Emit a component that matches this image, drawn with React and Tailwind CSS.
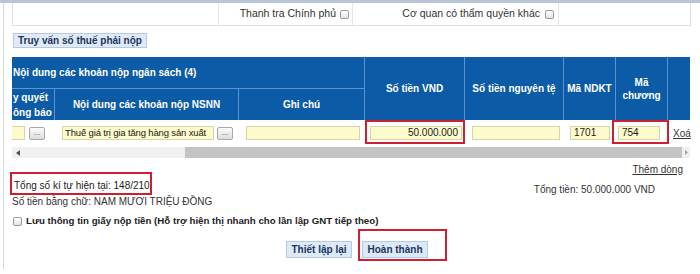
import React from "react";

function Check() {
  return (
    <span className="inline-block w-[9px] h-[9px] rounded-[2px] border border-[#9a9a9a] bg-gradient-to-b from-[#ffffff] to-[#e4e4e4] shrink-0" />
  );
}

function DotsBtn({ className = "" }) {
  return (
    <span
      className={
        "inline-flex items-end justify-center w-[16px] h-[13px] rounded-[2px] border border-[#a8a8a8] bg-gradient-to-b from-[#fbfbfb] to-[#dcdcdc] text-[8px] leading-[8px] text-[#444] pb-[2px] shrink-0 " +
        className
      }
    >
      ...
    </span>
  );
}

function Inp({ className = "", children }) {
  return (
    <div
      className={
        "h-[14px] bg-[#fdfbcc] border border-[#d8d4a8] flex items-center leading-[12px] text-[#1a1a1a] whitespace-nowrap overflow-hidden " +
        className
      }
    >
      {children}
    </div>
  );
}

const COLS =
  "grid grid-cols-[43px_184px_126px_100px_99px_52px_52px_22px]";

const hc =
  "flex items-center justify-center text-center text-white font-bold border-r border-[#5a93cd] leading-[13px]";

export default function App() {
  return (
    <div className="w-[700px] h-[274px] overflow-hidden bg-white font-['Liberation_Sans',Arial,sans-serif] text-[10px] text-[#222]">
      <div className="h-[3px] bg-[#b9c5d9]" />
      <div className="ml-[3px] h-[266px] border-l border-[#d6d6d6] pl-[8px]">
        {/* top box */}
        <div className="flex h-[23px] w-[679px] border-x border-b border-[#dedede]">
          <div className="w-[206px] border-r border-[#e6e6e6]" />
          <div className="w-[134px] border-r border-[#e6e6e6] flex items-center justify-end gap-[4px] pr-[3px] text-[10.5px] text-[#333]">
            <span>Thanh tra Chính phủ</span>
            <Check />
          </div>
          <div className="w-[206px] border-r border-[#e6e6e6] flex items-center justify-end gap-[5px] pr-[4px] text-[10.5px] text-[#333]">
            <span>Cơ quan có thẩm quyền khác</span>
            <Check />
          </div>
          <div className="flex-1" />
        </div>

        {/* query button */}
        <div className="mt-[7px] ml-[1px] w-[134px] h-[15px] flex items-center justify-center bg-[#dfeaf6] border border-[#b5c9e2] font-bold text-[10px] text-[#1b355f]">
          Truy vấn số thuế phải nộp
        </div>

        {/* table */}
        <div className="mt-[9px] w-[678px]">
          <div className={COLS + " grid-rows-[32px_31px] bg-[#0c5ba7]"}>
            <div className={"col-span-3 row-start-1 col-start-1 flex items-center text-white font-bold border-r border-b border-[#5a93cd] pl-[1px]"}>
              Nội dung các khoản nộp ngân sách (4)
            </div>
            <div className={hc + " row-span-2 row-start-1 col-start-4"}>Số tiền VND</div>
            <div className={hc + " row-span-2 row-start-1 col-start-5"}>Số tiền nguyên tệ</div>
            <div className={hc + " row-span-2 row-start-1 col-start-6"}>Mã NDKT</div>
            <div className={hc + " row-span-2 row-start-1 col-start-7"}>
              Mã
              <br />
              chương
            </div>
            <div className={hc + " row-span-2 row-start-1 col-start-8 border-r-0"} />
            <div className={"row-start-2 col-start-1 flex flex-col justify-center text-white font-bold border-r border-[#5a93cd] leading-[15px] pl-[1px]"}>
              <span>y quyết</span>
              <span>ông báo</span>
            </div>
            <div className={hc + " row-start-2 col-start-2"}>Nội dung các khoản nộp NSNN</div>
            <div className={hc + " row-start-2 col-start-3"}>Ghi chú</div>
          </div>

          {/* data row */}
          <div className={COLS + " h-[24px] bg-white text-[10px]"}>
            <div className="flex items-center pt-[2px]">
              <Inp className="w-[13px] border-l-0" />
              <DotsBtn className="ml-[4px]" />
            </div>
            <div className="flex items-center pl-[7px] pt-[2px]">
              <Inp className="w-[152px] pl-[2px] text-[9.5px] tracking-[-0.15px]">Thuế giá trị gia tăng hàng sản xuất</Inp>
              <DotsBtn className="ml-[3px]" />
            </div>
            <div className="flex items-center pl-[7px] pt-[2px]">
              <Inp className="w-[114px]" />
            </div>
            <div className="flex items-center">
              <div className="w-[103px] h-[24px] border-2 border-[#cf1f2e] flex items-center pl-[3px] pt-[2px]">
                <Inp className="w-[92px] justify-end pr-[3px]">50.000.000</Inp>
              </div>
            </div>
            <div className="flex items-center pl-[7px] pt-[2px]">
              <Inp className="w-[88px]" />
            </div>
            <div className="flex items-center pl-[6px] pt-[2px]">
              <Inp className="w-[40px] pl-[3px]">1701</Inp>
            </div>
            <div className="flex items-center">
              <div className="-ml-[4px] w-[57px] h-[24px] border-2 border-[#cf1f2e] flex items-center pl-[4px] pt-[2px] shrink-0">
                <Inp className="w-[42px] pl-[3px]">754</Inp>
              </div>
            </div>
            <div className="flex items-center pl-[5px] pt-[2px]">
              <span className="underline text-[#333]">Xoá</span>
            </div>
          </div>

          {/* scrollbar */}
          <div className="mt-[3px] h-[11px] flex bg-[#f0f0f0]">
            <div className="w-[12px] flex items-center justify-center">
              <svg width="4" height="6" viewBox="0 0 4 6">
                <path d="M4 0 L0 3 L4 6 Z" fill="#505050" />
              </svg>
            </div>
            <div className="w-[161px]" />
            <div className="flex-1 bg-[#c3c3c3]" />
            <div className="w-[8px] flex items-center justify-center">
              <svg width="3" height="5" viewBox="0 0 3 5">
                <path d="M0 0 L3 2.5 L0 5 Z" fill="#a0a0a0" />
              </svg>
            </div>
          </div>
        </div>

        {/* totals */}
        <div className="flex justify-between w-[678px]">
          <div className="flex flex-col">
            <div className="mt-[14px] -ml-[2px] w-[142px] h-[23px] border-2 border-[#cf1f2e] flex items-end pl-[2px] pb-[1px] leading-[12px]">
              Tổng số kí tự hiện tại: 148/210
            </div>
            <div className="mt-[1px] leading-[11px] text-[#333]">
              Số tiền bằng chữ: NAM MƯƠI TRIỆU ĐỒNG
            </div>
          </div>
          <div className="flex flex-col items-end pr-[7px]">
            <span className="mt-[6px] underline leading-[11px] text-[#333]">Thêm dòng</span>
            <span className="mt-[9px] mr-[28px] leading-[11px] text-[#333]">
              Tổng tiền: 50.000.000 VND
            </span>
          </div>
        </div>

        {/* save checkbox */}
        <div className="mt-[9px] flex items-center gap-[4px] ml-[1px] h-[11px]">
          <Check />
          <span className="font-bold text-[9.7px] text-[#222]">
            Lưu thông tin giấy nộp tiền (Hỗ trợ hiện thị nhanh cho lần lập GNT tiếp theo)
          </span>
        </div>

        {/* buttons */}
        <div className="mt-[2px] flex items-end pl-[274px]">
          <div className="mb-[3px] w-[66px] h-[17px] flex items-center justify-center bg-[#dce9f7] border border-[#b5c9e2] font-bold text-[#1b355f]">
            Thiết lập lại
          </div>
          <div className="ml-[6px] border-2 border-[#cf1f2e] pt-[10px] pl-[2px] pr-[17px] pb-[1px]">
            <div className="w-[66px] h-[17px] flex items-center justify-center bg-[#dce9f7] border border-[#b5c9e2] font-bold text-[#1b355f]">
              Hoàn thành
            </div>
          </div>
        </div>
      </div>
    </div>
  );
}
